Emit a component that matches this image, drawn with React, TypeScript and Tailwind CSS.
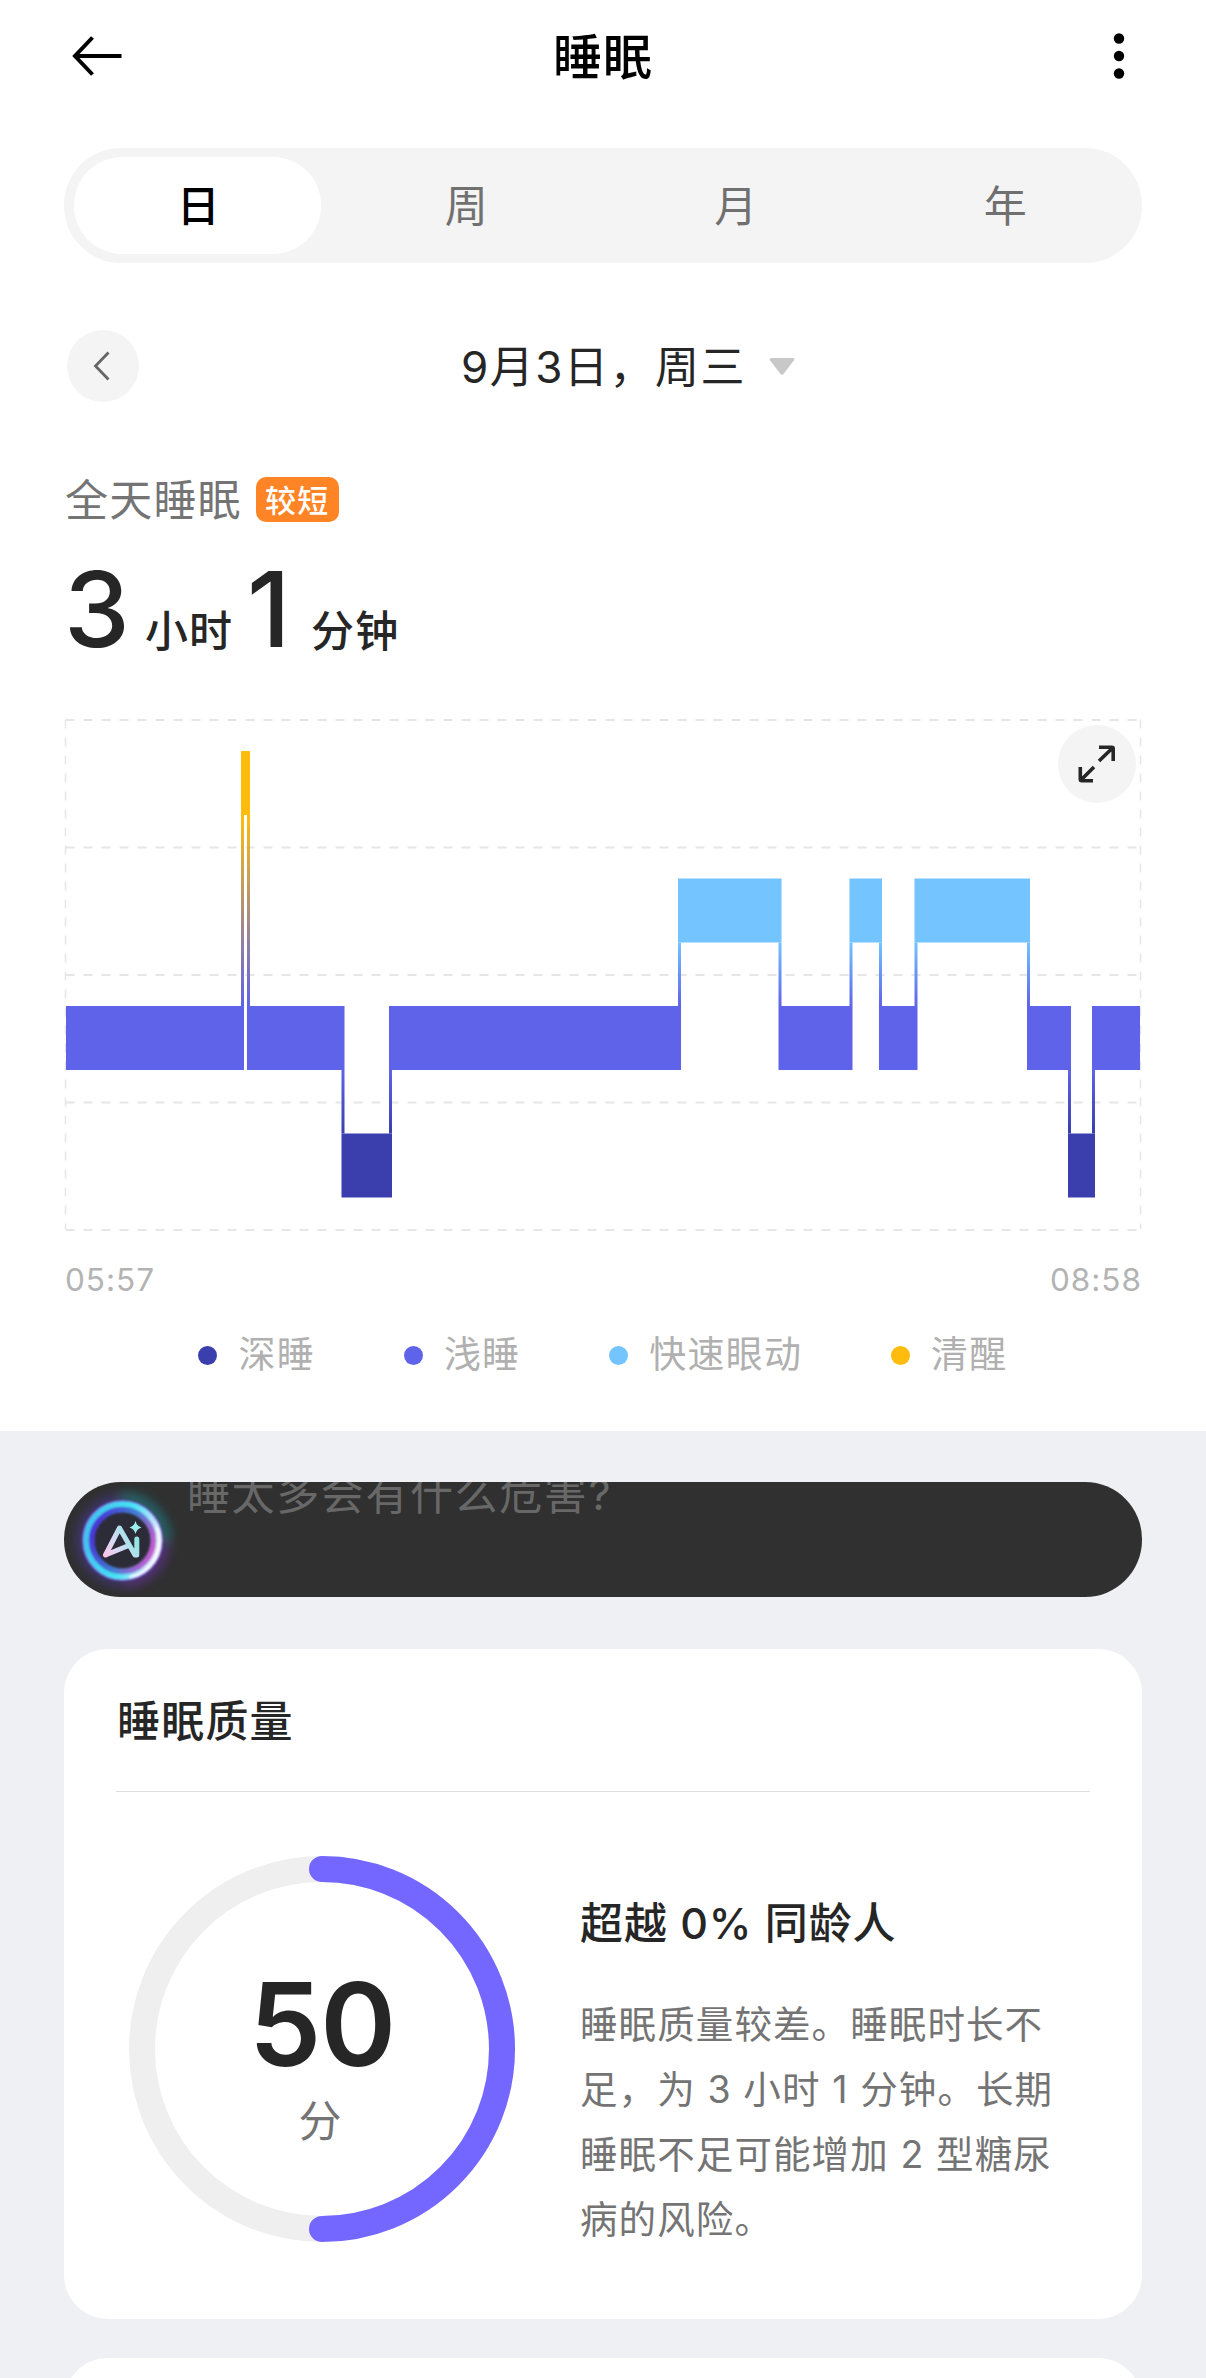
type Stage = "awake" | "rem" | "light" | "deep";

type Segment = { stage: Stage; from: number; to: number };

const COLORS: Record<Stage, string> = {
  awake: "#ffbc0d",
  rem: "#73c4ff",
  light: "#5e63e9",
  deep: "#3a3fad",
};

const TOPS: Record<Stage, number> = {
  awake: 32,
  rem: 159.5,
  light: 287,
  deep: 414.5,
};

const BAR_HEIGHT = 64;
const LINK = 3;

const SEGMENTS: Segment[] = [
  { stage: "light", from: 2, to: 180 },
  { stage: "awake", from: 177, to: 186 },
  { stage: "light", from: 183, to: 280.5 },
  { stage: "deep", from: 277.5, to: 328 },
  { stage: "light", from: 325, to: 617 },
  { stage: "rem", from: 614, to: 717.5 },
  { stage: "light", from: 714.5, to: 788.5 },
  { stage: "rem", from: 785.5, to: 818 },
  { stage: "light", from: 815, to: 853.5 },
  { stage: "rem", from: 850.5, to: 966 },
  { stage: "light", from: 963, to: 1007 },
  { stage: "deep", from: 1004, to: 1031 },
  { stage: "light", from: 1028, to: 1076 },
];

const TABS = ["日", "周", "月", "年"];

const LEGEND = [
  { label: "深睡", dot: "bg-[#3a3fad]" },
  { label: "浅睡", dot: "bg-[#5e63e9]" },
  { label: "快速眼动", dot: "bg-[#73c4ff]" },
  { label: "清醒", dot: "bg-[#ffbc0d]" },
];

function Header() {
  return (
    <header className="grid h-28 grid-cols-3 items-center pl-[72px] pr-20">
      <svg className="h-10 w-[50px]" viewBox="0 0 50 40" fill="none" stroke="#000" strokeWidth="4">
        <path d="M49.5 20H4M20.5 1.5 3 20l17.5 18.5" />
      </svg>
      <h1 className="pl-2 pt-0.5 text-center text-[49px] font-medium leading-none tracking-[1px] text-black">
        睡眠
      </h1>
      <svg className="h-12 w-3.5 justify-self-end" viewBox="0 0 14 48" fill="#000">
        <circle cx="7" cy="6.5" r="5.2" />
        <circle cx="7" cy="24" r="5.2" />
        <circle cx="7" cy="41.5" r="5.2" />
      </svg>
    </header>
  );
}

function Tabs() {
  return (
    <nav className="mx-16 mt-9 grid h-[115px] grid-cols-4 rounded-[57px] bg-[#f4f4f4] text-[43px]">
      {TABS.map((tab, i) => (
        <button
          key={tab}
          className={
            i === 0
              ? "my-[9px] ml-[10px] mr-[13px] rounded-[48px] bg-white pl-0.5 pt-0.5 font-medium text-black"
              : "pr-1 pt-0.5 text-[#707070]"
          }
        >
          {tab}
        </button>
      ))}
    </nav>
  );
}

function DateRow() {
  return (
    <div className="mx-[67px] mt-[67px] flex h-[72px] items-center">
      <button className="flex size-[72px] items-center justify-center rounded-full bg-[#f4f4f4]">
        <svg className="h-8 w-5" viewBox="0 0 20 32" fill="none" stroke="#666" strokeWidth="2.8">
          <path d="M15.5 2.5 2.5 16l13 13.5" />
        </svg>
      </button>
      <div className="ml-[322px] flex items-center">
        <span className="w-[286px] whitespace-nowrap pt-0.5 text-[44px] leading-none tracking-[1.5px] text-[#262626]">
          9月3日，周三
        </span>
        <svg className="ml-[22px] h-[17px] w-[26px]" viewBox="0 0 26 17" fill="#c8c8c8">
          <path d="M2 0h22q2 .5 1 2.2L14.5 16q-1.5 1.5-3 0L1 2.2Q0 .5 2 0Z" />
        </svg>
      </div>
    </div>
  );
}

function Summary() {
  return (
    <section className="mt-[75px] px-16">
      <div className="flex h-[45px] items-center">
        <span className="pl-px pt-0.5 text-[43px] leading-none tracking-[1.2px] text-[#747474]">
          全天睡眠
        </span>
        <span className="ml-[14px] flex h-[45px] w-[83px] items-center justify-center rounded-[10px] bg-[#ff8426] pt-px text-[31px] font-medium leading-none tracking-[1.2px] text-white">
          较短
        </span>
      </div>
      <div className="mt-8 flex h-[108px] items-baseline whitespace-nowrap pt-px text-[#262626]">
        <span className="w-[81px] text-[105px] font-medium leading-[108px]">3</span>
        <span className="w-[102px] text-[43px] font-medium tracking-[1px]">小时</span>
        <span className="w-[64px] text-[105px] font-medium leading-[108px]">1</span>
        <span className="text-[43px] font-medium tracking-[1.2px]">分钟</span>
      </div>
    </section>
  );
}

function Hypnogram() {
  return (
    <div className="relative mx-16 mt-[57px]">
      <svg className="block h-[514px] w-[1078px]" viewBox="0 0 1078 514">
        <defs>
          {(["awake", "rem", "deep"] as Stage[]).map((stage) => {
            const lower = stage === "deep";
            return (
              <linearGradient
                key={stage}
                id={`link-${stage}`}
                gradientUnits="userSpaceOnUse"
                x1="0"
                x2="0"
                y1={lower ? TOPS.light + BAR_HEIGHT : TOPS[stage] + BAR_HEIGHT}
                y2={lower ? TOPS.deep : TOPS.light}
              >
                <stop offset="0" stopColor={lower ? COLORS.light : COLORS[stage]} />
                <stop offset="1" stopColor={lower ? COLORS.deep : COLORS.light} />
              </linearGradient>
            );
          })}
        </defs>

        {/* grid */}
        <g stroke="#e6e6e6" strokeWidth="2" strokeDasharray="9 9">
          {[0, 127.5, 255, 382.5, 510].map((y) => (
            <path key={y} d={`M1.5 ${y + 1}H1076`} />
          ))}
          <path strokeWidth="1.5" d="M1.5 0.5V510" />
          <path strokeWidth="1.5" d="M1076.5 0.5V510" />
        </g>

        {/* thin links between neighbouring stages */}
        {SEGMENTS.slice(1).map((seg, i) => {
          const prev = SEGMENTS[i];
          const other = seg.stage === "light" ? prev.stage : seg.stage;
          const top = Math.min(TOPS[seg.stage], TOPS[prev.stage]) + BAR_HEIGHT;
          const bottom = Math.max(TOPS[seg.stage], TOPS[prev.stage]);
          return (
            <rect
              key={seg.from}
              x={seg.from}
              y={top}
              width={LINK}
              height={bottom - top}
              fill={`url(#link-${other})`}
            />
          );
        })}

        {SEGMENTS.map((seg) => (
          <rect
            key={seg.from}
            x={seg.from}
            y={TOPS[seg.stage]}
            width={seg.to - seg.from}
            height={BAR_HEIGHT}
            fill={COLORS[seg.stage]}
          />
        ))}
      </svg>

      <button className="absolute right-[6px] top-[6px] flex size-[78px] items-center justify-center rounded-full bg-[#f4f4f4]">
        <svg className="size-10" viewBox="0 0 40 40" fill="none" stroke="#262626" strokeWidth="3.6">
          <path d="M22 3.300h12.700q1.500 0 1.500 1.500V17M35.500 4 22 17" />
          <path d="M16 36.700H4.800q-1.500 0-1.500-1.500V23M4 36 17 23" />
        </svg>
      </button>

      <div className="mt-[27px] flex justify-between pl-px text-[31.5px] leading-10 tracking-[1px] text-[#b3b3b3]">
        <span>05:57</span>
        <span>08:58</span>
      </div>

      <ul className="mt-[35px] flex justify-center gap-[89px] text-[37px] leading-10 tracking-[1.2px] text-[#b0b0b0]">
        {LEGEND.map((item) => (
          <li key={item.label} className="flex items-center">
            <span className={`mr-[21px] size-[19px] rounded-full ${item.dot}`} />
            {item.label}
          </li>
        ))}
      </ul>
    </div>
  );
}

function AiLogo() {
  return (
    <svg className="h-[115px] w-[116px] shrink-0" viewBox="0 0 116 115" fill="none">
      <defs>
        <linearGradient id="ai-ring" x1="24" y1="50" x2="98" y2="68" gradientUnits="userSpaceOnUse">
          <stop offset="0" stopColor="#43c4f0" />
          <stop offset="0.5" stopColor="#45e6f5" />
          <stop offset="0.8" stopColor="#b9e4ff" />
          <stop offset="1" stopColor="#fff6ff" />
        </linearGradient>
        <linearGradient id="ai-inner" x1="28" y1="50" x2="90" y2="74" gradientUnits="userSpaceOnUse">
          <stop offset="0" stopColor="#4a35dc" />
          <stop offset="0.5" stopColor="#3f7fd6" />
          <stop offset="1" stopColor="#d258cf" />
        </linearGradient>
        <linearGradient id="ai-letter" x1="40" y1="76" x2="76" y2="56" gradientUnits="userSpaceOnUse">
          <stop offset="0" stopColor="#ffc0e8" />
          <stop offset="0.4" stopColor="#d9daf5" />
          <stop offset="1" stopColor="#84e8e2" />
        </linearGradient>
        <filter id="ai-glow" x="-40%" y="-40%" width="180%" height="180%">
          <feGaussianBlur stdDeviation="6" />
        </filter>
        <filter id="ai-soft" x="-10%" y="-10%" width="120%" height="120%">
          <feGaussianBlur stdDeviation="0.8" />
        </filter>
      </defs>
      <g filter="url(#ai-glow)" strokeWidth="9" opacity="0.75">
        <path d="M58 16a43 43 0 0 1 43 43" stroke="#1c8f99" />
        <path d="M100 60a41 41 0 0 1-41 40" stroke="#6f35b0" />
        <path d="M58 98a40 40 0 0 1 0-80" stroke="#4a3a9c" />
      </g>
      <circle cx="58.500" cy="58.500" r="28" fill="#2c2c38" />
      <g filter="url(#ai-soft)">
        <circle cx="58.500" cy="58.500" r="39" stroke="#7a4ae0" strokeWidth="3" />
        <circle cx="58.500" cy="58.500" r="31" stroke="url(#ai-inner)" strokeWidth="6" />
        <circle cx="58.500" cy="58.500" r="36.500" stroke="url(#ai-ring)" strokeWidth="5.500" />
        <path d="M93 45a37 37 0 0 1-27 50" stroke="#fff" strokeWidth="2" />
      </g>
      <path
        d="M41.500 73 55.500 46 71 73M41.500 73l22-9M72.800 57v16"
        stroke="url(#ai-letter)"
        strokeWidth="5"
        strokeLinecap="round"
        strokeLinejoin="round"
      />
      <path d="M71.500 39q1.200 5.200 6 6.500-4.800 1.300-6 6.500-1.200-5.200-6-6.500 4.800-1.300 6-6.500Z" fill="#9aeeee" />
    </svg>
  );
}

function AiBanner() {
  return (
    <div className="flex h-[115px] overflow-hidden rounded-[57px] bg-[#303030]">
      <AiLogo />
      {/* scrolling hint, half way out of the bar */}
      <p className="-mt-2.5 ml-[7px] text-[43px] leading-[44px] tracking-[1.6px] text-[#686868]">
        睡太多会有什么危害?
      </p>
    </div>
  );
}

function ScoreRing() {
  return (
    <div className="relative size-[386px] shrink-0">
      <svg className="size-full" viewBox="0 0 386 386" fill="none" strokeWidth="26">
        <circle cx="193" cy="193" r="180" stroke="#efefef" />
        <path d="M193 13a180 180 0 0 1 0 360" stroke="#7367ff" strokeLinecap="round" />
      </svg>
      <div className="absolute inset-0 flex flex-col items-center pt-[113px]">
        <span className="text-[115px] font-semibold leading-[112px] tracking-[-1px] text-[#262626]">
          50
        </span>
        <span className="mt-[18px] pr-1 text-[43px] leading-[44px] text-[#747474]">分</span>
      </div>
    </div>
  );
}

function QualityCard() {
  return (
    <section className="mt-[52px] h-[670px] rounded-[44px] bg-white px-[52px]">
      <h2 className="border-b border-[#dedede] pb-[48px] pl-px pt-[50px] text-[43px] font-medium leading-[44px] tracking-[1.2px] text-[#262626]">
        睡眠质量
      </h2>
      <div className="flex pl-[13px] pt-[64px]">
        <ScoreRing />
        <div className="ml-[65px] pt-[45px]">
          <h3 className="whitespace-nowrap text-[43px] font-medium leading-[44px] tracking-[0.9px] text-[#262626]">
            超越 0% 同龄人
          </h3>
          <p className="mt-[47px] whitespace-nowrap text-[37.5px] leading-[65px] tracking-[1.1px] text-[#747474]">
            睡眠质量较差。睡眠时长不
            <br />
            足，为 3 小时 1 分钟。长期
            <br />
            睡眠不足可能增加 2 型糖尿
            <br />
            病的风险。
          </p>
        </div>
      </div>
    </section>
  );
}

export default function App() {
  return (
    <div
      lang="zh-CN"
      className="h-[2378px] w-[1206px] overflow-hidden bg-white font-['Inter','Noto_Sans_CJK_SC',sans-serif]"
    >
      <div className="h-[1431px]">
        <Header />
        <Tabs />
        <DateRow />
        <Summary />
        <Hypnogram />
      </div>
      <main className="h-[947px] bg-[#eff0f3] px-16 pt-[51px]">
        <AiBanner />
        <QualityCard />
        <div className="mt-[39px] h-40 rounded-[44px] bg-white" />
      </main>
    </div>
  );
}
